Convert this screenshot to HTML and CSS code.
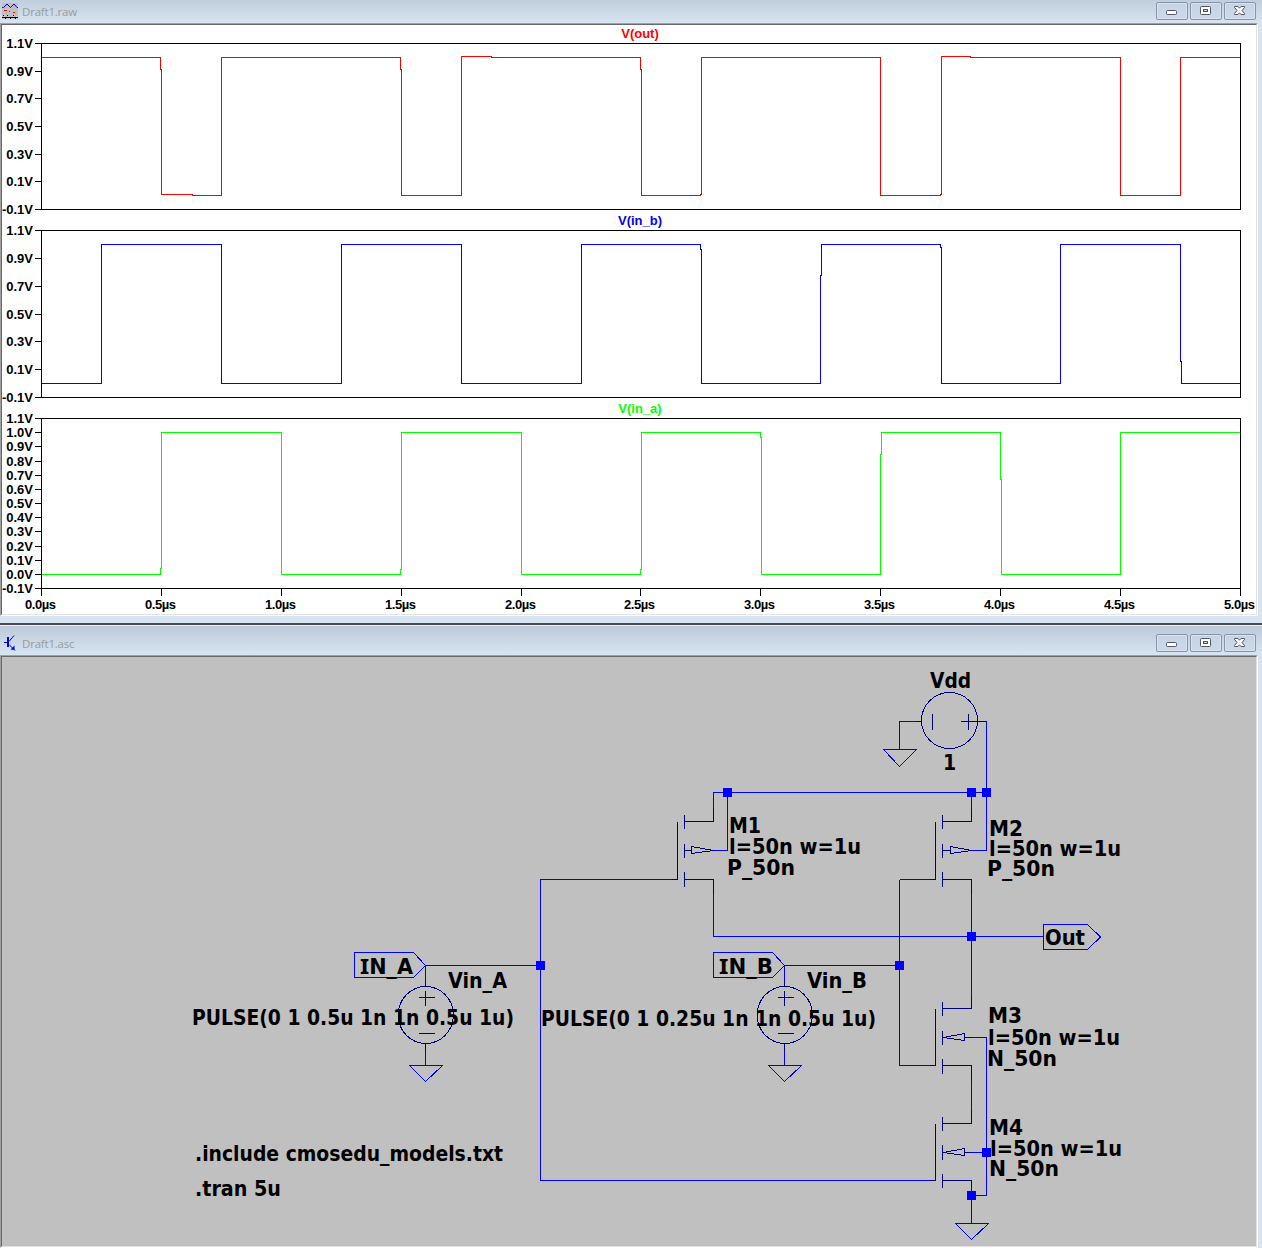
FILE: index.html
```html
<!DOCTYPE html>
<html lang="en">
<head>
<meta charset="utf-8">
<title>Draft1</title>
<link rel="stylesheet" href="styles.css">
</head>
<body>
<section class="window window-raw">
  <header class="titlebar">
    <svg class="doc-icon" width="16" height="16" viewBox="0 0 16 16">
      <rect width="16" height="16" fill="#c0c0c0"/>
      <path d="M0 4.5 L1.5 4.500 L5 1 L8.500 4.500 L12 1 L15 4.500 L16 4.500" fill="none" stroke="#00f"/>
      <path d="M2 7.500h3M7 8.500h1M11 9.500h2" stroke="red"/>
      <path d="M0 14.500h16M1 12.500h1M5 12.500h1M11 12.500h1M3 15.500h1M8 15.500h1M13 15.500h1" stroke="#000"/>
    </svg>
    <span class="doc-name"><span>Draft1.raw</span></span>
    <div class="buttons">
      <span class="btn"><svg width="30" height="16" viewBox="0 0 30 16"><use href="#g-min"/></svg></span>
      <span class="btn"><svg width="30" height="16" viewBox="0 0 30 16"><use href="#g-max"/></svg></span>
      <span class="btn"><svg width="30" height="16" viewBox="0 0 30 16"><use href="#g-close"/></svg></span>
    </div>
  </header>
  <div class="pane pane-plot">
    <svg class="canvas" width="1254" height="589" viewBox="2 25 1254 589">
      <g class="lines" transform="translate(.5 .5)">
        <path class="axis" d="M41 43H1240V209H41ZM41 230H1240V397H41ZM41 418H1240V588H41Z"/>
        <path class="axis" d="M34 43h7M34 71h7M34 98h7M34 126h7M34 154h7M34 181h7M34 209h7M34 230h7M34 258h7M34 286h7M34 314h7M34 341h7M34 369h7M34 397h7M34 418h7M34 432h7M34 446h7M34 461h7M34 475h7M34 489h7M34 503h7M34 517h7M34 531h7M34 546h7M34 560h7M34 574h7M34 588h7"/>
        <path class="axis" d="M41 588v7M161 588v7M281 588v7M401 588v7M521 588v7M640 588v7M760 588v7M880 588v7M1000 588v7M1120 588v7M1240 588v7"/>
        <path class="red" d="M41 57H160V69H161V194H192V195H221V57H400V69H401V195H461V56H491V57H640V69H641V195H700V194H701V57H880V195H940V194H941V56H970V57H1120V195H1180V57H1239"/>
        <path class="blue" d="M41 383H101V244H221V383H341V244H461V383H581V244H700V249H701V383H820V275H821V244H940V247H941V383H1060V244H1180V361H1181V383H1239"/>
        <path class="green" d="M41 574H160V568H161V432H281V574H400V569H401V432H521V574H640V569H641V432H760V437H761V574H880V454H881V432H1000V479H1001V574H1120V432H1239"/>
      </g>
      <g class="trace-name">
        <text x="640" y="38" fill="red">V(out)</text>
        <text x="640" y="225" fill="blue">V(in_b)</text>
        <text x="640" y="413" fill="lime">V(in_a)</text>
      </g>
      <g class="volts">
        <text x="33" y="48">1.1V</text><text x="33" y="76">0.9V</text><text x="33" y="103">0.7V</text><text x="33" y="131">0.5V</text><text x="33" y="159">0.3V</text><text x="33" y="186">0.1V</text><text x="33" y="214">-0.1V</text>
        <text x="33" y="235">1.1V</text><text x="33" y="263">0.9V</text><text x="33" y="291">0.7V</text><text x="33" y="319">0.5V</text><text x="33" y="346">0.3V</text><text x="33" y="374">0.1V</text><text x="33" y="402">-0.1V</text>
        <text x="33" y="423">1.1V</text><text x="33" y="437">1.0V</text><text x="33" y="451">0.9V</text><text x="33" y="466">0.8V</text><text x="33" y="480">0.7V</text><text x="33" y="494">0.6V</text><text x="33" y="508">0.5V</text><text x="33" y="522">0.4V</text><text x="33" y="536">0.3V</text><text x="33" y="551">0.2V</text><text x="33" y="565">0.1V</text><text x="33" y="579">0.0V</text><text x="33" y="593">-0.1V</text>
      </g>
      <g class="times">
        <text x="25" y="609" textLength="31">0.0µs</text><text x="145" y="609" textLength="31">0.5µs</text><text x="265" y="609" textLength="31">1.0µs</text><text x="385" y="609" textLength="31">1.5µs</text><text x="505" y="609" textLength="31">2.0µs</text><text x="624" y="609" textLength="31">2.5µs</text><text x="744" y="609" textLength="31">3.0µs</text><text x="864" y="609" textLength="31">3.5µs</text><text x="984" y="609" textLength="31">4.0µs</text><text x="1104" y="609" textLength="31">4.5µs</text><text x="1224" y="609" textLength="31">5.0µs</text>
      </g>
    </svg>
  </div>
</section>
<section class="window window-asc">
  <header class="titlebar">
    <svg class="doc-icon" width="16" height="17" viewBox="0 0 16 17">
      <path d="M2 7.500h3M7 6.500L12 .5M7 9.500l6 6" fill="none" stroke="#00f"/>
      <path d="M5 2h2v10h-2zM12.500 15v-4.500l-4 4z" fill="#00f"/>
    </svg>
    <span class="doc-name"><span>Draft1.asc</span></span>
    <div class="buttons">
      <span class="btn"><svg width="30" height="16" viewBox="0 0 30 16"><g id="g-min" fill="#fff" stroke="#535666"><rect x="9.500" y="7.500" width="10" height="4" rx="1"/></g></svg></span>
      <span class="btn"><svg width="30" height="16" viewBox="0 0 30 16"><g id="g-max" stroke="#535666"><rect x="9.500" y="3.500" width="10" height="8" rx="1" fill="#fff"/><rect x="12.500" y="6.500" width="4" height="2" fill="#c6d5e5"/></g></svg></span>
      <span class="btn"><svg width="30" height="16" viewBox="0 0 30 16"><path id="g-close" d="M9.500 3.500H13L14.500 5.200L16 3.500H19.500V4.500L17 7.500L19.500 10.500V11.500H16L14.500 9.800L13 11.500H9.500V10.500L12 7.500L9.500 4.500Z" fill="#fff" stroke="#535666"/></svg></span>
    </div>
  </header>
  <div class="pane pane-schematic">
    <svg class="canvas" width="1254" height="589" viewBox="2 657 1254 589">
      <g class="lines" transform="translate(.5 .5)">
        <path class="wire" d="M713 808V792H986M727 792V850H713M671 879H540V1180H929M713 893V936H1043M425 965H540M784 965H899M899 879V1065M899 879H929M899 1065H929M425 965V980M784 965V980M899 749V721H915M986 721V850H971M971 792V808M971 893V995M971 1080V1109M971 1037H986V1195H971M971 1152H986M971 1187V1223M425 1050V1065M784 1050V1065"/>
        <path class="wire" d="M883 749H916L899 766ZM955 1223H988L971 1239ZM409 1065H442L425 1081ZM768 1065H801L784 1081Z"/>
        <path class="wire" d="M1043 924H1087L1100 936.500L1087 949H1043ZM354 952H413L425 965L413 977H354ZM713 952H772L784 965L772 977H713Z"/>
        <g class="part">
          <path d="M684 814V828M684 843V857M684 871V886M677 821V879H671M684 821H713V808M684 879H713V893M684 850H691M691 846V853L713 850Z"/>
          <path d="M942 814V828M942 843V857M942 871V886M935 821V879H929M942 821H971V808M942 879H971V893M942 850H950M950 846V853L971 850Z"/>
          <path d="M942 1001V1015M942 1030V1044M942 1058V1073M935 1008V1065H929M942 1008H971V995M942 1065H971V1080M971 1037H964M964 1033V1040L943 1037Z"/>
          <path d="M942 1116V1130M942 1144V1159M942 1173V1187M935 1123V1180H929M942 1123H971V1109M942 1180H971V1195M971 1152H964M964 1148V1155L943 1152Z"/>
          <circle cx="949" cy="720" r="28"/>
          <path d="M915 721H921M932 713V729M960 721H976M968 713V729M977 721H986"/>
          <ellipse cx="425.300" cy="1014.500" rx="27.600" ry="28.500"/>
          <path d="M425 980V986M418 997H434M425 990V1005M418 1033H434M425 1043V1050"/>
          <ellipse cx="784.300" cy="1014.500" rx="27.600" ry="28.500"/>
          <path d="M784 980V986M777 997H793M784 990V1005M777 1033H793M784 1043V1050"/>
        </g>
      </g>
      <path class="node" d="M723 788h9v9h-9zM967 788h9v9h-9zM982 788h9v9h-9zM967 932h9v9h-9zM895 961h9v9h-9zM536 961h9v9h-9zM982 1148h9v9h-9zM967 1191h9v9h-9z"/>
      <g class="label">
        <text x="930" y="688" textLength="41" lengthAdjust="spacingAndGlyphs">Vdd</text>
        <text x="943" y="770">1</text>
        <text x="729" y="833" textLength="32" lengthAdjust="spacingAndGlyphs">M1</text>
        <text x="729" y="854" textLength="132" lengthAdjust="spacingAndGlyphs">l=50n w=1u</text>
        <text x="727" y="875" textLength="68" lengthAdjust="spacingAndGlyphs">P_50n</text>
        <text x="989" y="836" textLength="34" lengthAdjust="spacingAndGlyphs">M2</text>
        <text x="989" y="856" textLength="132" lengthAdjust="spacingAndGlyphs">l=50n w=1u</text>
        <text x="987" y="876" textLength="68" lengthAdjust="spacingAndGlyphs">P_50n</text>
        <text x="1045" y="945" textLength="40" lengthAdjust="spacingAndGlyphs">Out</text>
        <text x="988" y="1023" textLength="34" lengthAdjust="spacingAndGlyphs">M3</text>
        <text x="988" y="1045" textLength="132" lengthAdjust="spacingAndGlyphs">l=50n w=1u</text>
        <text x="987" y="1066" textLength="70" lengthAdjust="spacingAndGlyphs">N_50n</text>
        <text x="989" y="1135" textLength="34" lengthAdjust="spacingAndGlyphs">M4</text>
        <text x="990" y="1156" textLength="132" lengthAdjust="spacingAndGlyphs">l=50n w=1u</text>
        <text x="989" y="1176" textLength="70" lengthAdjust="spacingAndGlyphs">N_50n</text>
        <text x="360" y="974" textLength="53" lengthAdjust="spacingAndGlyphs"><tspan class="serif-i">I</tspan>N_A</text>
        <text x="448" y="988" textLength="59" lengthAdjust="spacingAndGlyphs">Vin_A</text>
        <text x="719" y="974" textLength="54" lengthAdjust="spacingAndGlyphs"><tspan class="serif-i">I</tspan>N_B</text>
        <text x="807" y="988" textLength="60" lengthAdjust="spacingAndGlyphs">Vin_B</text>
        <text x="192" y="1025" textLength="322" lengthAdjust="spacingAndGlyphs">PULSE(0 1 0.5u 1n 1n 0.5u 1u)</text>
        <text x="541" y="1026" textLength="335" lengthAdjust="spacingAndGlyphs">PULSE(0 1 0.25u 1n 1n 0.5u 1u)</text>
        <text x="195" y="1161" textLength="308" lengthAdjust="spacingAndGlyphs">.include cmosedu_models.txt</text>
        <text x="195" y="1196" textLength="86" lengthAdjust="spacingAndGlyphs">.tran 5u</text>
      </g>
    </svg>
  </div>
</section>
</body>
</html>
```
FILE: styles.css
```css
* { box-sizing: border-box; }
body {
  margin: 0;
  width: 1262px;
  height: 1248px;
  overflow: hidden;
  background: #d7e4f2;
  font-family: "Open Sans", sans-serif;
}
.window { display: flex; flex-direction: column; }
.window-raw { height: 623px; }
.window-asc {
  height: 625px;
  border-top: 2px solid #4b4b4f;
}
.titlebar {
  display: flex;
  align-items: flex-start;
  height: 23px;
  padding: 2px 6px 0 2px;
  background: linear-gradient(#c0cedc, #d7e4f2);
}
.window-asc .titlebar {
  height: 30px;
  padding-top: 8px;
  border-top: 1px solid #e9f0f7;
  background: linear-gradient(#bccad8, #d7e4f2);
}
.doc-icon { display: block; margin-top: 1px; }
.doc-name {
  flex: 1;
  margin-left: 4px;
  color: #999b9d;
  font-size: 11.5px;
  letter-spacing: -.2px;
  line-height: 20px;
}
.buttons { display: flex; gap: 2px; }
.btn {
  width: 32px;
  height: 18px;
  border: 1px solid #8593ad;
  border-radius: 2px;
  background: linear-gradient(#c5d3e2, #cbd9e8);
  box-shadow: inset 0 0 0 1px #d8e3ef;
}
.btn svg { display: block; }
.pane {
  width: 1258px;
  border: 1px solid;
  border-color: #a0a0a0 #fff #fff #a0a0a0;
}
.canvas {
  display: block;
  box-sizing: content-box;
  border: 1px solid;
  border-color: #696969 #e3e3e3 #e3e3e3 #696969;
}
.pane-plot .canvas { background: #fff; }
.pane-schematic .canvas { background: #c0c0c0; }
.lines { fill: none; stroke-width: 1; shape-rendering: crispEdges; }
.axis { stroke: #000; }
.red { stroke: #f00; }
.blue { stroke: #00f; }
.green { stroke: #0f0; }
.wire { stroke: #00f; }
.part { stroke: #000080; }
.node { fill: #00f; }
.trace-name, .volts, .times {
  font: bold 13px "Liberation Sans", Arial, sans-serif;
}
.trace-name { text-anchor: middle; }
.volts { text-anchor: end; }
.label {
  font: bold 21px "DejaVu Sans Condensed", "DejaVu Sans", sans-serif;
  font-stretch: condensed;
}
.label text, .times text { white-space: pre; }
.serif-i { font-family: "Noto Sans", sans-serif; font-size: 21.5px; }
```
